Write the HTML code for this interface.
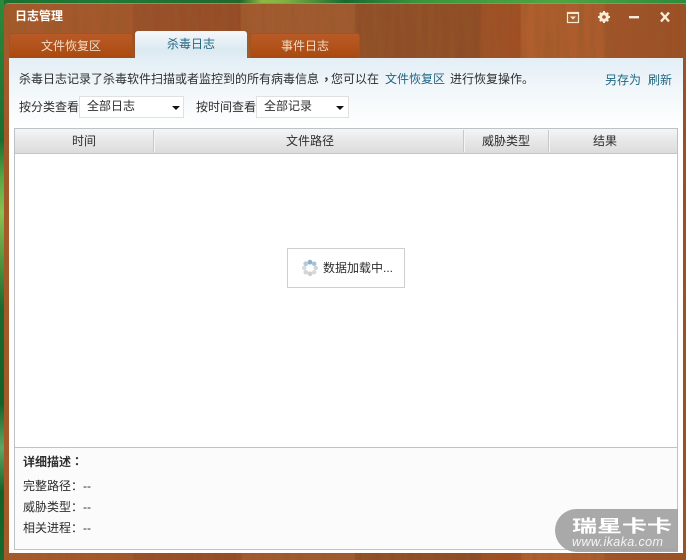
<!DOCTYPE html>
<html lang="zh">
<head>
<meta charset="utf-8">
<title>日志管理</title>
<style>
html,body{margin:0;padding:0}
body{width:686px;height:560px;overflow:hidden;position:relative;background:#14692e;font:12px/14px "Liberation Sans","WenQuanYi Zen Hei","Noto Sans CJK SC",sans-serif;color:#2e2e2e}
.a{position:absolute}
.t{position:absolute;white-space:nowrap;line-height:14px}
.p{display:inline-block;transform:translate(0,0)}
.b{display:inline-block;transform:translate(3px,-1px)}
.c{display:inline-block;transform:translate(4px,-3px);font-weight:bold}
#bg{left:0;top:0;width:686px;height:560px;background:
linear-gradient(90deg,#1a6f30 0,#1f7a34 110px,#22682b 240px,#8fb843 262px,#86b243 283px,#176a30 345px,#3a963c 420px,#4fa442 560px,#2c8c3c 686px)}
#bgl{left:0;top:0;width:4px;height:560px;background:linear-gradient(180deg,#2c8a3a 0,#1a6d30 25%,#5aa844 32%,#8cc050 38%,#1a6a2e 55%,#136029 72%,#5fa862 80%,#126028 88%,#156a2c 100%)}
#wood{left:4px;top:3px;width:682px;height:557px;border-radius:6px 6px 0 0;overflow:hidden;background:linear-gradient(90deg,#a65a2c 0,#a4572b 128px,#99502a 130px,#964b26 236px,#a35a30 238px,#a05a30 350px,#904e28 352px,#8e4c27 476px,#a04f25 478px,#a04f25 516px,#b05e2e 518px,#ac5b2d 600px,#a15428 602px,#9a4f26 682px)}
#wood svg{position:absolute;left:0;top:0}
#edge{left:4px;top:3px;width:682px;height:4px;border-top:1px solid rgba(200,180,130,.5);border-radius:6px 0 0 0;box-sizing:border-box}
.tab{position:absolute;top:33px;height:25px;box-sizing:border-box;border:1px solid #a2541f;border-bottom:0;border-radius:3px 3px 0 0;background:linear-gradient(180deg,#b85a26 0,#b3521c 50%,#a84a10 100%);color:#f1dcc6;text-align:center;line-height:25px}
#tab2{left:135px;top:31px;width:112px;height:27px;border:0;background:linear-gradient(180deg,#f6f8fa 0,#e8f0f5 35%,#dce9f2 70%,#e2eef5 100%);color:#1f6682;line-height:27px}
#main{left:9px;top:58px;width:674px;height:495px;background:linear-gradient(180deg,#e3eef6 0,#eff5f9 25px,#f8fbfc 50px,#fff 72px,#fffdfb 100%)}
.lnk{color:#1f6682}
.sel{position:absolute;top:96px;height:22px;box-sizing:border-box;background:#fff;border:1px solid #e0e0e0}
.arr{position:absolute;width:0;height:0;border:4px solid transparent;border-top:4px solid #111;border-bottom:0;top:106px}
#table{left:14px;top:128px;width:664px;height:422px;box-sizing:border-box;border:1px solid #bcc2c6;background:#fff}
#head{left:0;top:0;width:662px;height:25px;box-sizing:border-box;border-bottom:1px solid #c2c6c8;background:linear-gradient(180deg,#f5f5f5 0,#e6e6e6 55%,#dcdcdc 100%)}
.sep{position:absolute;top:130px;width:1px;height:22px;background:#c6c9ca;box-shadow:1px 0 0 #f5f5f5}
#det{left:15px;top:447px;width:662px;height:102px;background:#fbfbfb;border-top:1px solid #bcc2c6;box-sizing:border-box}
#load{left:287px;top:248px;width:118px;height:40px;box-sizing:border-box;border:1px solid #cfcfcf;background:#fff}
#logo{left:555px;top:509px;width:123px;height:43px;background:rgba(160,160,160,.9);border-radius:22px 0 0 22px}
</style>
</head>
<body>
<div class="a" id="bg"></div>
<div class="a" id="bgl"></div>
<div class="a" id="wood">
<svg width="682" height="557" xmlns="http://www.w3.org/2000/svg">
<filter id="g" x="0" y="0" width="100%" height="100%">
<feTurbulence type="fractalNoise" baseFrequency="0.16 0.012" numOctaves="3" seed="7"/>
<feColorMatrix type="matrix" values="0 0 0 0 0.3  0 0 0 0 0.1  0 0 0 0 0.02  1.3 0 0 0 -0.5"/>
</filter>
<rect width="682" height="557" filter="url(#g)"/>
</svg>
</div>
<div class="a" id="edge"></div>

<div class="t" style="left:15px;top:9px;color:#fff;font-weight:bold">日志管理</div>

<svg class="a" style="left:560px;top:6px" width="120" height="22" xmlns="http://www.w3.org/2000/svg">
<rect x="7.5" y="6.5" width="11" height="10" fill="#a9642f" stroke="#f4e9d6" stroke-width="1.2"/>
<rect x="7" y="6" width="12" height="2" fill="#f4e9d6"/>
<path d="M10 10.5h6l-3 3z" fill="#f4e9d6"/>
<circle cx="44" cy="11" r="3.6" fill="none" stroke="#f6ecd9" stroke-width="2.6"/>
<path d="M44 5v12M38 11h12M39.8 6.8l8.4 8.4M48.2 6.8l-8.4 8.4" stroke="#f6ecd9" stroke-width="2"/>
<circle cx="44" cy="11" r="1.8" fill="#a5592b"/>
<rect x="69" y="10" width="10" height="2.4" fill="#f6ecd9"/>
<path d="M101 6.5l8 9M109 6.5l-8 9" stroke="#f6ecd9" stroke-width="2.4"/>
</svg>

<div class="tab" style="left:9px;width:124px">文件恢复区</div>
<div class="tab" style="left:250px;width:110px">事件日志</div>
<div id="main" class="a"></div>
<div class="tab" id="tab2">杀毒日志</div>

<div class="t" style="left:19px;top:72px">杀毒日志记录了杀毒软件扫描或者监控到的所有病毒信息<span class="c">，</span>您可以在</div>
<div class="t lnk" style="left:385px;top:72px">文件恢复区</div>
<div class="t" style="left:450px;top:72px">进行恢复操作。</div>
<div class="t lnk" style="left:605px;top:73px">另存为</div>
<div class="t lnk" style="left:648px;top:73px">刷新</div>

<div class="t" style="left:19px;top:100px">按分类查看</div>
<div class="sel" style="left:79px;width:105px"></div>
<div class="t" style="left:87px;top:99px">全部日志</div>
<div class="arr" style="left:172px"></div>
<div class="t" style="left:196px;top:100px">按时间查看</div>
<div class="sel" style="left:256px;width:93px"></div>
<div class="t" style="left:264px;top:99px">全部记录</div>
<div class="arr" style="left:336px"></div>

<div class="a" id="table"><div class="a" id="head"></div></div>
<div class="sep" style="left:153px"></div>
<div class="sep" style="left:463px"></div>
<div class="sep" style="left:548px"></div>
<div class="t" style="left:72px;top:134px">时间</div>
<div class="t" style="left:286px;top:134px">文件路径</div>
<div class="t" style="left:482px;top:134px">威胁类型</div>
<div class="t" style="left:593px;top:134px">结果</div>

<div class="a" id="load"></div>
<svg class="a" style="left:301px;top:259px" width="18" height="18" xmlns="http://www.w3.org/2000/svg">
<circle cx="9" cy="3.2" r="2.4" fill="#8fb0c8"/>
<circle cx="13.2" cy="4.8" r="2.3" fill="#a8c2d4"/>
<circle cx="14.8" cy="9" r="2.2" fill="#c8d6df"/>
<circle cx="13.2" cy="13.2" r="2.2" fill="#d8d8d8"/>
<circle cx="9" cy="14.8" r="2.4" fill="#cfcfcf"/>
<circle cx="4.8" cy="13.2" r="2.3" fill="#d6d6d6"/>
<circle cx="3.2" cy="9" r="2.3" fill="#d4dde3"/>
<circle cx="4.8" cy="4.8" r="2.4" fill="#b6cbd9"/>
</svg>
<div class="t" style="left:323px;top:261px">数据加载中...</div>

<div class="a" id="det"></div>
<div class="t" style="left:23px;top:455px;font-weight:bold">详细描述<span class="b">：</span></div>
<div class="t" style="left:23px;top:479px">完整路径<span class="p">：</span>--</div>
<div class="t" style="left:23px;top:500px">威胁类型<span class="p">：</span>--</div>
<div class="t" style="left:23px;top:521px">相关进程<span class="p">：</span>--</div>

<div class="a" id="logo"></div>
<svg class="a" style="left:555px;top:509px" width="123" height="43" xmlns="http://www.w3.org/2000/svg">
<text x="0" y="0" transform="translate(17,23) scale(1,.68)" font-family="WenQuanYi Zen Hei,Noto Sans CJK SC,sans-serif" font-size="25" font-weight="bold" fill="#fff">瑞星卡卡</text>
<text x="17" y="37" font-family="Liberation Sans,sans-serif" font-style="italic" font-size="12.6" letter-spacing=".35" fill="#f4f4f4">www.ikaka.com</text>
</svg>
</body>
</html>
